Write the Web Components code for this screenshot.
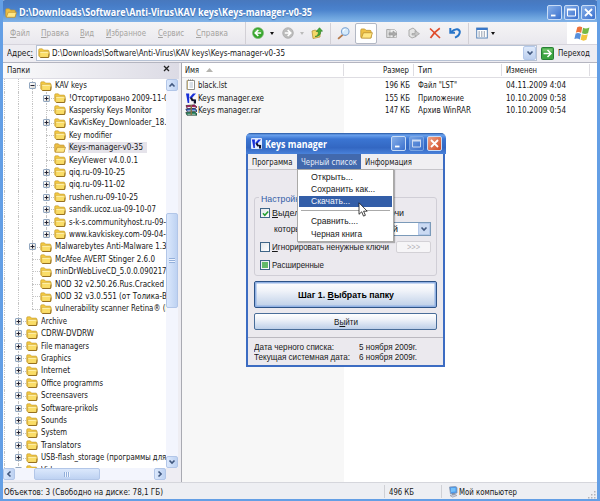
<!DOCTYPE html>
<html lang="ru"><head><meta charset="utf-8"><title>Keys manager</title>
<style>html,body{margin:0;width:600px;height:501px;overflow:hidden}body{font:9px/12px "DejaVu Sans Condensed","DejaVu Sans",sans-serif;color:#161616}</style></head>
<body><explorer-window></explorer-window>
<script>
const define=(name,css,html,setup)=>customElements.define(name,class extends HTMLElement{
  connectedCallback(){
    if(this.shadowRoot)return;
    const r=this.attachShadow({mode:'open'});
    r.innerHTML=`<style>*{box-sizing:border-box}${css}</style>`+(typeof html==='function'?html(this):html);
    if(setup)setup(this,r);
  }});

// A single line of text condensed or expanded to the width given in "w".
define('fit-text',`:host{display:block;white-space:nowrap;flex:none}span{display:inline-block;transform-origin:0 50%}`,
 '<span><slot></slot></span>',(el,r)=>{
  const w=+el.getAttribute('w'),s=r.querySelector('span');
  if(w){el.style.width=w+'px';const n=s.getBoundingClientRect().width;if(n)s.style.transform=`scaleX(${w/n})`}
});

const icons={
 folder:`<svg viewBox="0 0 12 12"><path d="M.7 3q0-1.200 1-1.200h2.600l1.300 1.300h4.200q1 0 1 1v5.400H1.600Q.7 9.500.7 8.600z" fill="#f3c840" stroke="#c09830" stroke-width=".6"/><path d="M1.700 4.600h8l1.600.2-.4 5q-.1.600-.8.600H2.300q-.6 0-.6-.7z" fill="#fadd68" stroke="#c09630" stroke-width=".5"/><path d="M2.200 5.300h7.600" stroke="#fff3b4"/><path d="M2.300 10.500h8.300l.5-4" fill="none" stroke="#8d6717" stroke-width=".9"/></svg>`,
 open:`<svg viewBox="0 0 12 12"><path d="M.7 3q0-1.200 1-1.200h2.600l1.300 1.300h3.700q1 0 1 1v5.900H1.500q-.8 0-.8-.8z" fill="#eec044" stroke="#bb9233" stroke-width=".7"/><path d="M1.300 10.200 3.200 5.300h8.300L9.900 10.300z" fill="#ffe784" stroke="#b98d2c" stroke-width=".7"/></svg>`,
 doc:`<svg viewBox="0 0 12 12"><path d="M2 1.500h7.500v9H2z" fill="#fff" stroke="#8f8f88"/><path d="M2.500 1v10" stroke="#b9a878"/><path d="M3 1h6" stroke="#777" stroke-dasharray="1 1"/><path d="M4.500 4h3.500M4.500 6h3.500M4.500 8h3.500" stroke="#8da1b8" stroke-width=".7"/></svg>`,
 k:`<svg viewBox="0 0 12 12"><path d="M1 1.500h3.200V11H2.700z" fill="#1830d8"/><path d="M4.300 5.800 8 1.500h3L6.500 6.500z" fill="#1830d8"/><path d="M5 6.200 7 5.300l1 2 3 .2v3.900H8.800L8.600 9 6.800 9.200z" fill="#10122c"/></svg>`,
 rar:`<svg viewBox="0 0 12 12"><path d="M1 1.500 9.500.8 12 3 10.800 4.200H2z" fill="#a52363" stroke="#31141f" stroke-width=".6"/><path d="M2.500 3.500h8" stroke="#eee"/><path d="M.8 5 9.500 4.300 12 6.300v1.200H2z" fill="#2e65c1" stroke="#171b35" stroke-width=".6"/><path d="M2.500 7h8" stroke="#eee"/><path d="M.8 8.500 9.500 7.700 12 9.800v1.400H2z" fill="#21835a" stroke="#12291d" stroke-width=".6"/><path d="M2.500 10.300h8" stroke="#ddd" stroke-width=".7"/><path d="M5.500 1h1.500v10H5.500z" fill="#867244"/></svg>`,
 back:`<svg viewBox="0 0 12 12"><circle cx="6" cy="6" r="5.500" fill="#35a52b" stroke="#7db874" stroke-width=".7"/><path d="M1.500 4.500Q6-.5 10.500 4.500" fill="#7bd16a" opacity=".6"/><path d="M6.300 3 3.300 6l3 3M3.500 6h5.700" fill="none" stroke="#fff" stroke-width="1.700"/></svg>`,
 fwd:`<svg viewBox="0 0 12 12"><circle cx="6" cy="6" r="5.300" fill="#bcbcbc" stroke="#a6a6a6" stroke-width=".7"/><path d="M5.700 3 8.700 6l-3 3M8.500 6H2.800" fill="none" stroke="#fff" stroke-width="1.700"/></svg>`,
 up:`<svg viewBox="0 0 12 12"><path d="M1 4 4.500 3l1 1L9 3v7l-7 1.500z" fill="#f4d868" stroke="#b89636" stroke-width=".8"/><path d="M4 9.500Q7.800 9 7.300 4.500H5.200L8.500.7l3 3.500H9.700Q10 9.500 4 9.500z" fill="#43aa35" stroke="#287c22" stroke-width=".6"/></svg>`,
 search:`<svg viewBox="0 0 12 12"><path d="M5.500 7 1 11" stroke="#b5794a" stroke-width="1.700"/><circle cx="7.600" cy="4.200" r="3.500" fill="#d5eafb" stroke="#7ba2d2"/><path d="M5.700 4q.3-1.700 2-1.900" fill="none" stroke="#fff"/></svg>`,
 move:`<svg viewBox="0 0 12 12"><path d="M.7 2.500h3l1 1h3.800v7H.7z" fill="#ddd" stroke="#aaa"/><path d="M4 2.500h4.500l2 2v6H4z" fill="#eee" stroke="#aaa" stroke-width=".7"/><path d="M3 5.800h4V4l4 3-4 3V8H3z" fill="#aaa" stroke="#8d8d8d" stroke-width=".5"/></svg>`,
 copy:`<svg viewBox="0 0 12 12"><path d="m1 3 4-2 3 2.500v6l-4 1.500L1 9z" fill="#e4e4e4" stroke="#aaa"/><path d="M4 6.500h3V3.500l4.500 3.200-4.200 3V8H4z" fill="#c5c5c5" stroke="#999" stroke-width=".6"/></svg>`,
 del:`<svg viewBox="0 0 12 12"><path d="M1 1.500 11 11M10.800 1.200Q5 5 1.500 11" fill="none" stroke="#df4b2b" stroke-width="1.700"/></svg>`,
 undo:`<svg viewBox="0 0 12 12"><path d="M1.300 1v4.700H6M1.700 5.400Q5 1.800 8.300 2.200q3.200 1 2.300 4-.8 2.900-4.600 4.400" fill="none" stroke="#2875c9" stroke-width="2"/></svg>`,
 views:`<svg viewBox="0 0 12 12"><rect x=".7" y="1" width="10.600" height="10" fill="#fff" stroke="#5b86b8"/><path d="M.5 2h11" stroke="#3977c9" stroke-width="2"/><path d="M2.500 5h7M2.500 7h7M2.500 9h7" stroke="#5a6a83" stroke-dasharray="1.300 1.300" stroke-width="1.100"/></svg>`,
 flag:`<svg viewBox="0 0 17 16"><path d="M4 2Q6.500.5 8.700 2.200L7.700 7.500Q5.200 5.900 2.700 7.200z" fill="#ee733b"/><path d="M9.500 2.500Q12 4 15.500 2.300L14.200 7.800Q11.500 9.200 8.500 7.800z" fill="#75b944"/><path d="M2.500 8Q5 7 7.500 8.400L6.500 13.600Q4 12 1.300 13.200z" fill="#568fdc"/><path d="M8.300 8.700Q11 10.200 14 8.700L12.700 14Q10 15.500 7.200 14z" fill="#f3c63d"/></svg>`,
 go:`<svg viewBox="0 0 13 13"><rect x=".5" y=".5" width="12" height="12" rx="1" fill="#3ba440" stroke="#277f35"/><path d="M1.500 1.500h10v3H1.500z" fill="#6cc268"/><path d="M6.500 3 10 6.500l-3.500 3.500M2.500 6.500h7" fill="none" stroke="#fff" stroke-width="1.500"/></svg>`,
 pc:`<svg viewBox="0 0 12 12"><path d="m2.500 1 6-.5 1.500 1V7L3.500 8z" fill="#4b9aec" stroke="#8795ae" stroke-width=".8"/><path d="M4 2h4.500v3.500L4 6z" fill="#74c1fb"/><path d="M5 7.500h3l.5 1.300H5z" fill="#777f96"/><path d="m3 9.500 5-1 2 1-4.500 1.700z" fill="#cfd3df" stroke="#8c93a5" stroke-width=".6"/></svg>`,
 check:`<svg viewBox="0 0 10 10"><path d="m2.200 4.800 2 2.200 3.800-4.300" fill="none" stroke="#23a032" stroke-width="1.700"/></svg>`,
 pointer:`<svg viewBox="0 0 10 15"><path d="M1 .8v11.500l2.700-2.500 1.800 4.300 1.900-.8-1.800-4.100h3.600z" fill="#fff" stroke="#111" stroke-width=".8"/></svg>`,
 d:`<svg viewBox="0 0 8 8"><path d="m1.500 2.500 2.500 2.600 2.500-2.600" fill="none" stroke="#41587f" stroke-width="1.600"/></svg>`
};
define('ui-icon',`:host{display:block;flex:none}svg{display:block;width:100%;height:100%}`,
 el=>icons[el.getAttribute('name')],(el)=>{const s=(el.getAttribute('size')||'12').split(' ');el.style.width=s[0]+'px';el.style.height=(s[1]||s[0])+'px';
 const t=el.getAttribute('turn');if(t)el.style.transform=`rotate(${t}deg)`});

define('caption-button',`:host{display:block;width:15px;height:15px;flex:none;border:1px solid #c8dcf6;border-radius:2px;background:linear-gradient(135deg,#86afe8,#3a70ce);box-sizing:border-box}
 :host([kind=close][hot]){background:linear-gradient(135deg,#f0a285,#d04a25)}:host([dim]){border-color:#8cb3e8;opacity:.75}svg{display:block}`,
 el=>`<svg width="13" height="13" fill="none" stroke="#fff" stroke-width="1.800">${{min:'<path d="M3 9.500h4.500"/>',max:'<path stroke-width="1" d="M2.500 3v7h8V3"/><path stroke-width="2" d="M2 3.500h9"/>',close:'<path d="m3 3 7 7M10 3l-7 7"/>'}[el.getAttribute('kind')]}</svg>`);

define('menu-strip',`:host{display:flex;flex:1;height:100%;align-items:center;padding-left:7px;color:#a5a3a0}fit-text{margin-right:var(--g)}`,
 ['Ф|айл|20|11','П|равка|28|11','В|ид|14|12','И|збранное|40|12','С|ервис|26|12','С|правка|32|0'].map(s=>{const[a,b,w,g]=s.split('|');
 return `<fit-text w="${w}" style="--g:${g}px"><u>${a}</u>${b}</fit-text>`}).join(''));

define('tool-bar',`:host{display:flex;height:23px;flex:none;background:linear-gradient(#f5f4f5,#e9e8ee);border-bottom:1px solid #d6d4dc;box-sizing:border-box}
 .tools{display:flex;align-items:center;width:322px;flex:none;border-left:1px solid #d2d0d6;padding-left:6px}
 .v{width:1px;height:21px;background:#d2d0d6}.a{border:2.500px solid transparent;border-top:3px solid #111;border-bottom:0;height:3px}
 .on{width:22px;height:21px;border:1px solid #b3b8c4;border-radius:2px;background:#fff;display:grid;place-items:center}
 .flag{background:#fff;width:30px;height:22px;display:grid;place-items:center}`,
 `<menu-strip></menu-strip><div class="tools"><ui-icon name="back"></ui-icon><i class="a" style="margin:0 8px 0 6px"></i><ui-icon name="fwd"></ui-icon><i class="a" style="margin:0 7px 0 6px;border-top-color:#bbb"></i><ui-icon name="up"></ui-icon><i class="v" style="margin:0 6px 0 7px"></i><ui-icon name="search" size="13"></ui-icon><span class="on" style="margin:0 9px 0 5px"><ui-icon name="open" size="13"></ui-icon></span><ui-icon name="move"></ui-icon><ui-icon name="copy" style="margin-left:10px"></ui-icon><ui-icon name="del" style="margin-left:9px"></ui-icon><ui-icon name="undo" style="margin-left:8px"></ui-icon><i class="v" style="margin:0 7px"></i><ui-icon name="views"></ui-icon><i class="a" style="margin-left:3px"></i></div><div class="flag"><ui-icon name="flag" size="18 17"></ui-icon></div>`);

define('address-bar',`:host{display:flex;height:17px;flex:none;background:#eeedf2;align-items:center;padding:0 6px 1px 4px;box-sizing:border-box}
 .f{display:flex;align-items:center;height:16px;width:501px;margin-left:3px;background:#fff;border:1px solid #b7c2d4;padding-left:1px}
 .b{margin-left:auto;width:13px;height:14px;border:1px solid #b5c9ea;border-radius:2px;background:linear-gradient(#dfeafb,#bccfee);display:grid;place-items:center}`,
 `<fit-text w="26">Адрес<u>:</u></fit-text><div class="f"><ui-icon name="folder"></ui-icon><fit-text w="233" style="margin-left:2px">D:\\Downloads\\Software\\Anti-Virus\\KAV keys\\Keys-manager-v0-35</fit-text><span class="b"><ui-icon name="d" size="8"></ui-icon></span></div><ui-icon name="go" size="13" style="margin-left:4px"></ui-icon><fit-text w="32" style="margin-left:4px">Переход</fit-text>`);

define('tree-row',`:host{display:flex;height:12.42px;align-items:center;position:relative}
 .e{width:7px;height:7px;flex:none;margin-right:4px}.x{border:1px solid #92a7c0;border-radius:1px;background:linear-gradient(135deg,#fff,#dbd9d2)}
 .x svg{display:block}.l{height:11px;line-height:11px;padding:0 4px 0 1px;margin-left:2px}.sel{background:#e5e3ea}
 .g{position:absolute;top:0;bottom:0;width:0;border-left:1px dotted #c4c4c4}.h{position:absolute;top:6px;width:8px;border-top:1px dotted #c4c4c4}`,
 el=>{const d=+el.dataset.d,k=el.dataset.k;let s='';for(let i=-1;i<=d;i++)s+=`<i class="g" style="left:${15+i*14}px;${el.dataset.last&&i==d?'bottom:50%':''}"></i>`;
 s+=`<i class="h" style="left:${15+d*14}px"></i>`;
 return s+`<span class="e ${k?'x':''}" style="margin-left:${12+d*14}px;z-index:1">${k?`<svg width="5" height="5"><path d="M.5 2.500h4${k=='+'?'M2.500.5v4':''}" stroke="#223"/></svg>`:''}</span><ui-icon name="${el.dataset.sel?'open':'folder'}"></ui-icon><span class="l ${el.dataset.sel?'sel':''}"><fit-text w="${el.dataset.w}"><slot></slot></fit-text></span>`});

define('scroll-track',`:host{display:flex;background:#f3f5fd;justify-content:space-between;flex:none}:host([v]){flex-direction:column;width:12px;position:relative}
 :host(:not([v])){height:12px}.b,.t{border:1px solid #b2c6e8;border-radius:2px;background:linear-gradient(90deg,#dbe8fc,#bed2f2)}.b{width:12px;height:12px;display:grid;place-items:center}
 .t{display:grid;place-items:center}.t::after{content:"";width:6px;height:5px;background:repeating-linear-gradient(90deg,#93afda 0 1px,#edf3fe 1px 2px)}:host([v]) .t{margin:122px 0 auto}:host([v]) .t::after{background:repeating-linear-gradient(#93afda 0 1px,#edf3fe 1px 2px)}`,
 el=>el.hasAttribute('v')?`<span class="b"><ui-icon name="d" size="8" turn="180"></ui-icon></span><span class="t" style="height:95px"></span><span class="b"><ui-icon name="d" size="8"></ui-icon></span>`:
 `<span class="b"><ui-icon name="d" size="8" turn="90"></ui-icon></span><span class="t" style="width:66px;margin-left:-35px;background:linear-gradient(#dbe8fc,#bed2f2)"></span><span class="b"><ui-icon name="d" size="8" turn="-90"></ui-icon></span>`);

const tree=[[1,'-','KAV keys',32],[2,'+','!Отсортировано 2009-11-05',104],[2,'','Kaspersky Keys Monitor',83],[2,'+','KavKisKey_Downloader_18.3',102],[2,'','Key modifier',43],[2,'','Keys-manager-v0-35',74],[2,'','KeyViewer v4.0.0.1',69],[2,'+','qiq.ru-09-10-25',56],[2,'+','qiq.ru-09-11-02',56],[2,'+','rushen.ru-09-10-25',69],[2,'+','sandik.ucoz.ua-09-10-07',87],[2,'+','s-k-s.communityhost.ru-09-10',106],[2,'+','www.kavkiskey.com-09-04-12',106],[1,'+','Malwarebytes Anti-Malware 1.34',116],[1,'','McAfee AVERT Stinger 2.6.0',100],[1,'','minDrWebLiveCD_5.0.0.0902170',116],[1,'','NOD 32 v2.50.26.Rus.Cracked',109],[1,'','NOD 32 v3.0.551 (от Толика-В.)',117],[1,'','vulnerability scanner Retina® (R)',118],[0,'+','Archive',26],[0,'+','CDRW-DVDRW',53],[0,'+','File managers',48],[0,'+','Graphics',30],[0,'+','Internet',29],[0,'+','Office programms',62],[0,'+','Screensavers',47],[0,'+','Software-prikols',57],[0,'+','Sounds',26],[0,'+','System',26],[0,'+','Translators',40],[0,'+','USB-flash_storage (программы для)',128],[0,'+','Video',20]];
define('folder-pane',`:host{display:flex;flex-direction:column;width:176px;flex:none}header{height:16px;flex:none;display:flex;justify-content:space-between;align-items:center;background:linear-gradient(90deg,#fafafb,#dcdbe5);padding:0 9px 1px 4px;border-bottom:1px solid #dddce4}
 .m{display:flex;height:389px}.t{width:163px;overflow:hidden;background:#fff;padding-top:.4px}.m scroll-track{margin-top:0;height:389px}.c{display:flex;background:#eeedf3;height:13px}.c scroll-track{width:163px}`,
 `<header><fit-text w="23">Папки</fit-text><svg width="7" height="7" style="margin-top:-3px"><path d="m1 1 5 5M6 1 1 6" stroke="#222" stroke-width="1.300"/></svg></header><div class="m"><div class="t">${tree.map((r,i)=>`<tree-row data-d="${r[0]}" data-k="${r[1]}" data-w="${r[3]}" ${i==5?'data-sel="1"':''} ${i==18||i==12?'data-last="1"':''}>${r[2]}</tree-row>`).join('')}</div><scroll-track v></scroll-track></div><div class="c"><scroll-track></scroll-track></div>`);

define('file-row',`:host{display:grid;grid-template-columns:162px 70px 88px 1fr;height:12.500px;align-items:center}
 .n{display:flex;align-items:center;padding-left:3px;height:100%}.r{justify-self:end;padding-right:4px}.p{padding-left:4px}
 :host([head]){height:15px;border-bottom:1px solid #dedde2;box-sizing:border-box}:host([head]) span{border-right:1px solid #dedde2;width:100%;height:12px;display:flex;align-items:center}:host([head]) .r{justify-content:flex-end}:host([head]) .z{width:88px}`,
 el=>{const[n,s,t,m]=el.dataset.v.split('|').map(x=>x.split('~'));const f=x=>`<fit-text w="${x[1]}">${x[0]}</fit-text>`;
 return `<span class="n">${el.dataset.i?`<ui-icon name="${el.dataset.i}" style="margin-right:1px"></ui-icon>`:''}${f(n)}${el.hasAttribute('head')?'<svg width="8" height="5" style="margin-left:7px"><path d="m0 4 3.500-4L7 4z" fill="#b5b4af"/></svg>':''}</span><span class="r">${f(s)}</span><span class="p">${f(t)}</span><span class="p z">${f(m)}</span>`});
define('file-list',`:host{display:block;flex:1;background:#fff;border-left:1px solid #a9aab2;margin-left:2px}
 .b{height:404px;padding-top:1px;background:linear-gradient(90deg,#f7f7f7 162px,#fff 162px)}`,
 `<file-row head data-v="Имя~14|Размер~26|Тип~14|Изменен~31"></file-row><div class="b"><file-row data-i="doc" data-v='black.lst~29|196 КБ~25|Файл "LST"~39|04.11.2009 4:04~60'></file-row><file-row data-i="k" data-v="Keys manager.exe~66|155 КБ~25|Приложение~46|10.10.2009 0:58~60"></file-row><file-row data-i="rar" data-v="Keys manager.rar~63|147 КБ~25|Архив WinRAR~53|10.10.2009 0:54~60"></file-row></div>`);

define('status-bar',`:host{display:flex;align-items:center;height:18px;background:#eeeff3;border-top:1px solid #d5d6dc;padding-left:1px;flex:none;box-sizing:border-box}i{width:1px;height:13px;background:#cfd0d5}svg{margin:5px 1px 0 auto}`,
 `<fit-text w="159">Объектов: 3 (Свободно на диске: 78,1 ГБ)</fit-text><i style="margin-left:221px"></i><fit-text w="25" style="margin-left:4px">496 КБ</fit-text><i style="margin:0 5px 0 27px"></i><ui-icon name="pc"></ui-icon><fit-text w="58">Мой компьютер</fit-text><svg width="9" height="9" fill="#b4b4b8"><path d="M7 1h1.500v1.500H7zM4 4h1.500v1.500H4zM7 4h1.500v1.500H7zM1 7h1.500v1.500H1zM4 7h1.500v1.500H4zM7 7h1.500v1.500H7z"/></svg>`);

define('drop-menu',`:host{position:absolute;left:48.500px;top:36px;width:97px;height:73px;background:#fff;border:1px solid #aaa9a7;box-shadow:1px 1px 1px #0004;padding:1px 1px;display:block;box-sizing:border-box}
 div{height:12.300px;line-height:12px;padding-left:12px;display:flex;align-items:center}.s{background:#335ea8;color:#f2f5fc;height:11.500px}hr{border:0;border-top:1px solid #aaa;margin:3px 2px 4px;height:0}ui-icon{position:absolute;left:60px;top:32px}`,
 `<div><fit-text w="42">Открыть...</fit-text></div><div><fit-text w="64">Сохранить как...</fit-text></div><div class="s"><fit-text w="39">Скачать...</fit-text></div><hr><div><fit-text w="47">Сравнить....</fit-text></div><div><fit-text w="51">Черная книга</fit-text></div><ui-icon name="pointer" size="10 15"></ui-icon>`);

define('check-row',`:host{display:flex;align-items:center;height:12px}.c{width:10px;height:10px;border:1px solid #3e6587;background:linear-gradient(135deg,#e1e6ea,#fff);display:grid;place-items:center;margin-right:2px;flex:none}.p{width:6px;height:6px;background:#62b968}`,
 el=>`<span class="c">${{on:'<ui-icon name="check" size="9"></ui-icon>',mid:'<i class="p"></i>',off:''}[el.getAttribute('state')]}</span><slot></slot>`);

define('push-button',`:host{display:flex;align-items:center;justify-content:center;border:1px solid #496d99;border-radius:2px;background:linear-gradient(#fff,#f0f3f9 35%,#bdcfe8)}
 :host([main]){border:1px solid #2d5388;box-shadow:inset 0 0 0 1.500px #91b1e3;font-weight:bold;color:#000}:host([off]){border-color:#d3d1d6;background:#f6f5f7;color:#b5b4b9}`,'<slot></slot>');

define('keys-dialog',`:host{position:absolute;left:243px;top:133px;width:199px;height:234px;border:2.500px solid #3c6cc2;border-top:0;border-radius:5px 5px 0 0;background:#ebe9ee;display:flex;flex-direction:column;font-family:"Liberation Sans",sans-serif;font-size:9.500px;color:#181818;box-sizing:border-box}
 header{height:21px;flex:none;margin:0 -2.500px;background:linear-gradient(#24559f,#6ba2ee 2px,#3b75d2 6px,#3367c2 70%,#4a82da);border-radius:5px 5px 0 0;display:flex;align-items:center;padding:0 4px 0 5px;color:#fff;gap:3px;font:bold 10px/12px "Open Sans",sans-serif}
 header .k{background:#dfe9ff;border-radius:1px}nav{height:16px;display:flex;align-items:center;font:9px "DejaVu Sans Condensed",sans-serif;background:#f0eff2;border-bottom:1px solid #c6c5ca;flex:none}nav span{height:15px;display:flex;align-items:center;padding:0 4px}nav .a{background:#4269ad;color:#e6edf9;margin-left:.5px}
 .g{height:79px;flex:none;margin:27px 6px 0;border:1px solid #d0ced6;border-radius:3px;padding:4px 5px 0;position:relative}.leg{position:absolute;left:4px;top:-4px;line-height:10px;background:#ebe9ee;padding:0 2px;color:#315ca6}
 .cb{display:flex;align-items:center;height:14px;margin:3px 0 5px;padding-left:14px}.sel{width:100px;height:14px;border:1px solid #7b9ab9;background:#fff;display:flex;align-items:center;justify-content:space-between;margin-left:auto;padding-left:28px}.sel i{width:12px;height:12px;border:1px solid #b4c8e9;background:#cbdaf2;display:grid;place-items:center}
 .row{display:flex;height:12px;align-items:center;margin-bottom:6px}.foot{border-top:1px solid #bbb9c0;margin-top:7px;padding:4px 6px;display:grid;grid-template-columns:105px 1fr;grid-auto-rows:9.500px;line-height:10px}
 .g,.leg,.foot{font-size:9.200px}`,
 `<header><ui-icon class="k" name="k" size="11"></ui-icon><fit-text w="62">Keys manager</fit-text><caption-button kind="min" style="margin-left:auto"></caption-button><caption-button kind="max" dim></caption-button><caption-button kind="close" hot></caption-button></header>
 <nav><span><fit-text w="40.500">Программа</fit-text></span><span class="a"><fit-text w="56">Черный список</fit-text></span><span><fit-text w="47">Информация</fit-text></span></nav>
 <section class="g"><span class="leg"><fit-text w="43">Настройки</fit-text></span><check-row state="on" style="margin-top:5px"><fit-text w="132"><u>В</u>ыделить все нерабочие ключи</fit-text></check-row>
 <div class="cb"><fit-text w="32">которые</fit-text><span class="sel"><fit-text w="38">в любой</fit-text><i><ui-icon name="d" size="8"></ui-icon></i></span></div>
 <div class="row"><check-row state="off"><fit-text w="117"><u>И</u>гнорировать ненужные ключи</fit-text></check-row><push-button off style="width:35px;height:12px;margin-left:auto;box-sizing:border-box"><fit-text w="13">&gt;&gt;&gt;</fit-text></push-button></div><check-row state="mid"><fit-text w="52">Расширенные</fit-text></check-row></section>
 <push-button main style="height:27px;margin:5px 6px 5px;flex:none;box-sizing:border-box"><fit-text w="96">Шаг 1. <u>В</u>ыбрать папку</fit-text></push-button><push-button style="height:17px;margin:0 6px;flex:none;box-sizing:border-box"><fit-text w="24">В<u>ы</u>йти</fit-text></push-button>
 <div class="foot"><fit-text w="80">Дата черного списка:</fit-text><fit-text w="58">5 ноября 2009г.</fit-text><fit-text w="96">Текущая системная дата:</fit-text><fit-text w="58">6 ноября 2009г.</fit-text></div><drop-menu></drop-menu>`);

define('explorer-window',`:host{display:flex;flex-direction:column;width:600px;height:501px;position:relative;border:solid #649fe5;border-width:0 3px 2px;background:#eeedf2;overflow:hidden;box-sizing:border-box}
 header{display:flex;align-items:center;gap:2px;height:22px;flex:none;margin:0 -3px;padding:3px 4px 0 5px;background:linear-gradient(#4878bd,#477cc6 5px,#4b83cd 10px,#6fa6df 18px,#83b3e8);border-radius:5px 5px 0 0;color:#fff;font:bold 10px/13px "Open Sans",sans-serif;text-shadow:0 1px 1px #3a68ad}
 main{display:flex;height:420px;border-top:1px solid #b4b5c0;flex:none}`,
 `<header><ui-icon name="open"></ui-icon><fit-text w="293">D:\\Downloads\\Software\\Anti-Virus\\KAV keys\\Keys-manager-v0-35</fit-text><caption-button kind="min" style="margin-left:auto"></caption-button><caption-button kind="max"></caption-button><caption-button kind="close"></caption-button></header><tool-bar></tool-bar><address-bar></address-bar><main><folder-pane></folder-pane><file-list></file-list></main><status-bar></status-bar><keys-dialog></keys-dialog>`);
</script></body></html>
